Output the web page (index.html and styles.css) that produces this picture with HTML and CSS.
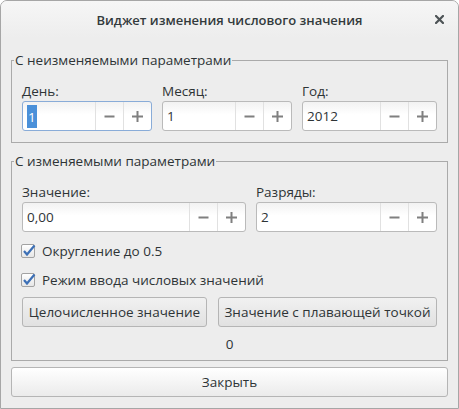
FILE: index.html
```html
<!DOCTYPE html>
<html lang="ru">
<head>
<meta charset="utf-8">
<title>Виджет изменения числового значения</title>
<link rel="stylesheet" href="styles.css">
</head>
<body>
<div class="window">
  <header class="titlebar">
    <span class="title">Виджет изменения числового значения</span>
    <span class="close-x"><svg width="9" height="9" viewBox="0 0 9 9"><path d="M1 1 L8 8 M8 1 L1 8" stroke="#4d5356" stroke-width="2.2" stroke-linecap="square"/></svg></span>
  </header>
  <main class="content">
    <fieldset class="frame">
      <legend>С неизменяемыми параметрами</legend>
      <div class="frame-body">
        <div class="row3">
          <div class="field">
            <div class="label">День:</div>
            <div class="spin focused">
              <span class="entry"><span class="sel">1</span></span>
              <span class="btn"><svg width="11" height="11" viewBox="0 0 11 11"><path d="M0.5 5.5 H10.5" stroke="#7f7f7f" stroke-width="2"/></svg></span>
              <span class="btn"><svg width="11" height="11" viewBox="0 0 11 11"><path d="M0 5.5 H11 M5.5 0 V11" stroke="#7f7f7f" stroke-width="2"/></svg></span>
            </div>
          </div>
          <div class="field">
            <div class="label">Месяц:</div>
            <div class="spin">
              <span class="entry">1</span>
              <span class="btn"><svg width="11" height="11" viewBox="0 0 11 11"><path d="M0.5 5.5 H10.5" stroke="#7f7f7f" stroke-width="2"/></svg></span>
              <span class="btn"><svg width="11" height="11" viewBox="0 0 11 11"><path d="M0 5.5 H11 M5.5 0 V11" stroke="#7f7f7f" stroke-width="2"/></svg></span>
            </div>
          </div>
          <div class="field">
            <div class="label">Год:</div>
            <div class="spin">
              <span class="entry">2012</span>
              <span class="btn"><svg width="11" height="11" viewBox="0 0 11 11"><path d="M0.5 5.5 H10.5" stroke="#7f7f7f" stroke-width="2"/></svg></span>
              <span class="btn"><svg width="11" height="11" viewBox="0 0 11 11"><path d="M0 5.5 H11 M5.5 0 V11" stroke="#7f7f7f" stroke-width="2"/></svg></span>
            </div>
          </div>
        </div>
      </div>
    </fieldset>

    <fieldset class="frame frame-second">
      <legend>С изменяемыми параметрами</legend>
      <div class="frame-body frame-body-second">
        <div class="row2">
          <div class="field">
            <div class="label">Значение:</div>
            <div class="spin">
              <span class="entry">0,00</span>
              <span class="btn"><svg width="11" height="11" viewBox="0 0 11 11"><path d="M0.5 5.5 H10.5" stroke="#7f7f7f" stroke-width="2"/></svg></span>
              <span class="btn"><svg width="11" height="11" viewBox="0 0 11 11"><path d="M0 5.5 H11 M5.5 0 V11" stroke="#7f7f7f" stroke-width="2"/></svg></span>
            </div>
          </div>
          <div class="field">
            <div class="label">Разряды:</div>
            <div class="spin">
              <span class="entry">2</span>
              <span class="btn"><svg width="11" height="11" viewBox="0 0 11 11"><path d="M0.5 5.5 H10.5" stroke="#7f7f7f" stroke-width="2"/></svg></span>
              <span class="btn"><svg width="11" height="11" viewBox="0 0 11 11"><path d="M0 5.5 H11 M5.5 0 V11" stroke="#7f7f7f" stroke-width="2"/></svg></span>
            </div>
          </div>
        </div>
        <div class="check">
          <span class="box"><svg width="14" height="14" viewBox="0 0 14 14"><path d="M3 7 L6 10.5 L13.5 1.5" fill="none" stroke="#3d70b6" stroke-width="2.2"/></svg></span>
          <span>Округление до 0.5</span>
        </div>
        <div class="check">
          <span class="box"><svg width="14" height="14" viewBox="0 0 14 14"><path d="M3 7 L6 10.5 L13.5 1.5" fill="none" stroke="#3d70b6" stroke-width="2.2"/></svg></span>
          <span>Режим ввода числовых значений</span>
        </div>
        <div class="buttons">
          <button class="button" type="button">Целочисленное значение</button>
          <button class="button" type="button">Значение с плавающей точкой</button>
        </div>
        <div class="result">0</div>
      </div>
    </fieldset>

    <button class="button close-btn" type="button">Закрыть</button>
  </main>
</div>
</body>
</html>
```

FILE: styles.css
```css
html, body {
  margin: 0;
  padding: 0;
  background: #ffffff;
}

.window {
  width: 459px;
  height: 409px;
  box-sizing: border-box;
  border: 1px solid #a6a6a6;
  border-radius: 7px 7px 0 0;
  background: #ededed;
  display: flex;
  flex-direction: column;
  overflow: hidden;
  font-family: "Open Sans", "DejaVu Sans", sans-serif;
  font-size: 13.5px;
  line-height: 16px;
  color: #2e3436;
}

.titlebar {
  height: 37px;
  flex: none;
  display: grid;
  grid-template-columns: 1fr auto 1fr;
  align-items: center;
  background: linear-gradient(#f6f6f6, #ededed);
}

.title {
  grid-column: 2;
  font-size: 13px;
  font-weight: 600;
  color: #333a3c;
}

.close-x {
  grid-column: 3;
  justify-self: end;
  margin-right: 14px;
  display: flex;
}

.content {
  flex: 1;
  display: flex;
  flex-direction: column;
  padding: 14px 10px 10px;
}

.frame {
  margin: 0;
  padding: 0;
  min-width: 0;
  border: 1px solid #aaaaaa;
}

.frame legend {
  padding: 0 1px;
  margin-left: 2px;
  line-height: 16px;
}

.frame-second {
  margin-top: 10px;
}

.frame-body {
  padding: 15px 10px 11px;
}

.frame-body-second {
  padding-bottom: 8px;
}

.row3 {
  display: grid;
  grid-template-columns: 130px 130px 135px;
  column-gap: 10px;
}

.row2 {
  display: grid;
  grid-template-columns: 224px 181px;
  column-gap: 10px;
}

.label {
  margin-bottom: 2px;
}

.spin {
  height: 30px;
  box-sizing: border-box;
  display: flex;
  border: 1px solid #bababa;
  border-radius: 3px;
  background: linear-gradient(#f2f2f2, #ffffff 45%);
}

.spin.focused {
  border-color: #89acd8;
}

.entry {
  flex: 1;
  display: flex;
  align-items: center;
  padding-left: 4px;
  color: #2e3436;
}

.sel {
  background: #4a90d9;
  color: #ffffff;
  padding: 4px 1px 3px;
}

.btn {
  width: 27px;
  flex: none;
  display: flex;
  align-items: center;
  justify-content: center;
  border-left: 1px solid #e1e1e1;
}

.check {
  display: flex;
  align-items: center;
  gap: 7px;
  height: 20px;
  margin-top: 9px;
  margin-left: -1px;
}

.box {
  width: 14px;
  height: 14px;
  box-sizing: border-box;
  border: 1px solid #a2a2a2;
  border-radius: 2px;
  background: linear-gradient(#ffffff, #e6e6e6);
  display: flex;
}

.box svg {
  overflow: visible;
  margin: -1px 0 0 -1px;
}

.buttons {
  display: grid;
  grid-template-columns: 185px 219px;
  column-gap: 11px;
  margin-top: 7px;
}

.button {
  height: 30px;
  margin: 0;
  padding: 0;
  box-sizing: border-box;
  border: 1px solid #b5b5b5;
  border-radius: 3px;
  background: linear-gradient(#f1f1f1, #e1e1e1);
  font-family: inherit;
  font-size: 13.5px;
  color: #2e3436;
}

.result {
  margin-top: 9px;
  text-align: center;
}

.close-btn {
  margin-top: 6px;
  width: 100%;
  background: linear-gradient(#ffffff, #ebebeb);
}
```
